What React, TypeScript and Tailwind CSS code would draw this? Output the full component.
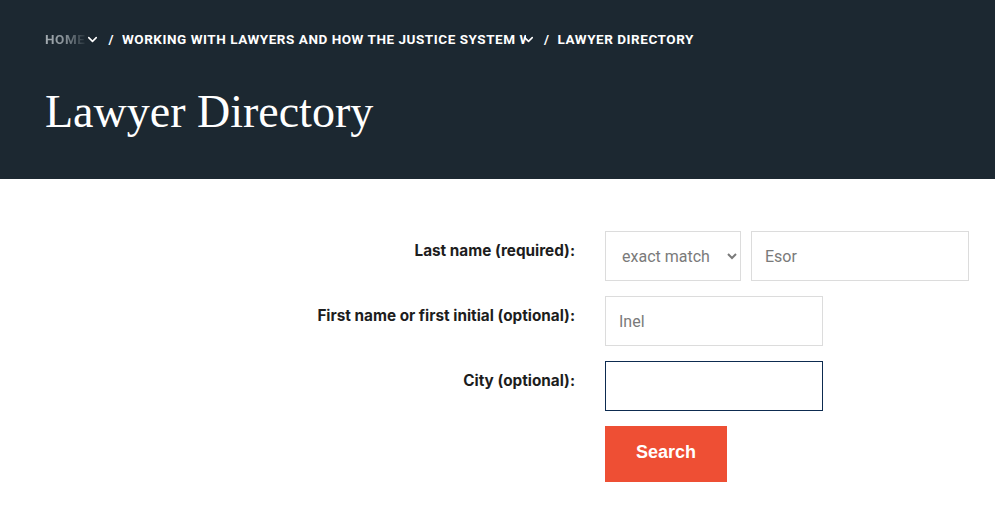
import { ChevronDown } from 'lucide-react'

const crumbFont = { fontFamily: 'Roboto, "Liberation Sans", sans-serif' }
const labelFont = { fontFamily: 'Inter, Roboto, sans-serif' }

export default function App() {
  return (
    <div className="w-[995px] h-[505px] bg-white overflow-hidden" style={{ fontFamily: 'Roboto, "Liberation Sans", sans-serif' }}>
      <header className="h-[179px] bg-[#1c2831] px-[45px] pt-[31px]">
        <nav className="flex items-center text-[13.5px] font-bold uppercase tracking-[0.04em] leading-[17px]" style={crumbFont}>
          <span className="bg-gradient-to-r from-[#a3abb0] via-[#8a9399] to-[#2a363e] bg-clip-text text-transparent">Home</span>
          <ChevronDown size={15} strokeWidth={2.5} className="text-white ml-0" />
          <span className="text-white mx-[8px]">/</span>
          <span className="text-white whitespace-nowrap overflow-hidden w-[404px]">Working with Lawyers and How the Justice System Works</span>
          <ChevronDown size={15} strokeWidth={2.5} className="text-white -ml-[5px]" />
          <span className="text-white mx-[8px]">/</span>
          <span className="text-white">Lawyer Directory</span>
        </nav>
        <h1
          className="mt-[38px] text-white text-[46px] leading-[52px]"
          style={{ fontFamily: '"Liberation Serif", "DejaVu Serif", serif' }}
        >
          Lawyer Directory
        </h1>
      </header>

      <form className="mt-[52px] grid grid-cols-[575px_1fr] gap-x-[30px] gap-y-[15px] text-[#1d1d1d]">
        <label className="text-right font-bold text-[15.3px] leading-[20px] pt-[10px]" style={labelFont}>
          Last name (required):
        </label>
        <div className="flex gap-[10px]">
          <select
            defaultValue="exact"
            className="w-[136px] h-[50px] border border-[#dcdcdc] pl-[12px] pr-[8px] text-[16px] text-[#7a7a7a] bg-white"
          >
            <option value="exact">exact match</option>
            <option value="starts">starts with</option>
          </select>
          <input
            defaultValue="Esor"
            className="w-[218px] h-[50px] border border-[#dcdcdc] px-[13px] text-[16px] text-[#7a7a7a] outline-none"
          />
        </div>

        <label className="text-right font-bold text-[15.3px] leading-[20px] pt-[10px]" style={labelFont}>
          First name or first initial (optional):
        </label>
        <div>
          <input
            defaultValue="Inel"
            className="w-[218px] h-[50px] border border-[#dcdcdc] px-[13px] text-[16px] text-[#7a7a7a] outline-none"
          />
        </div>

        <label className="text-right font-bold text-[15.3px] leading-[20px] pt-[10px]" style={labelFont}>
          City (optional):
        </label>
        <div>
          <input className="w-[218px] h-[50px] border border-[#0d2b50] px-[13px] text-[16px] text-[#7a7a7a] outline-none" />
        </div>

        <div />
        <div>
          <button
            type="button"
            className="w-[122px] h-[56px] pb-[4px] bg-[#ee4f34] text-white font-bold text-[18px]"
            style={{ fontFamily: '"Liberation Sans", Arial, sans-serif' }}
          >
            Search
          </button>
        </div>
      </form>
    </div>
  )
}
